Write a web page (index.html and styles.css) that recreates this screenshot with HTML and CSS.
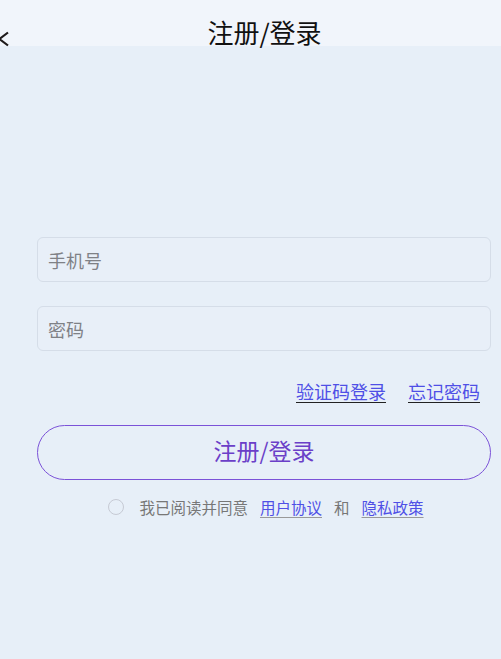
FILE: index.html
```html
<!DOCTYPE html>
<html lang="zh-CN">
<head>
  <meta charset="UTF-8" />
  <meta name="viewport" content="width=device-width, initial-scale=1.0" />
  <title>注册/登录</title>
  <link rel="stylesheet" href="styles.css">
</head>
<body>
  <header class="nav-bar">
    <a class="back" href="#">
      <svg width="12" height="16" viewBox="0 0 12 16"><path d="M10 1.5 L1.5 8 L10 14.5" fill="none" stroke="#1e1a1a" stroke-width="2.2"/></svg>
    </a>
    <h1 class="nav-title">注册/登录</h1>
  </header>

  <main class="login">
    <div class="field">
      <input type="text" placeholder="手机号">
    </div>
    <div class="field">
      <input type="password" placeholder="密码">
    </div>

    <div class="links">
      <a href="#">验证码登录</a>
      <a href="#">忘记密码</a>
    </div>

    <button class="submit">注册/登录</button>

    <div class="agree">
      <span class="radio"></span>
      <span>我已阅读并同意</span>
      <a href="#">用户协议</a>
      <span>和</span>
      <a href="#">隐私政策</a>
    </div>
  </main>
</body>
</html>
```

FILE: styles.css
```css
* {
  margin: 0;
  padding: 0;
  box-sizing: border-box;
}

body {
  font-family: "Noto Sans CJK SC", "Noto Sans", sans-serif;
  background: #e7eff8;
  color: #333;
  min-height: 100vh;
}

/* Top bar */
.nav-bar {
  position: relative;
  height: 46px;
  background: #f1f5fb;
  display: flex;
  justify-content: center;
  align-items: flex-end;
}

.back {
  position: absolute;
  left: -2px;
  top: 31px;
  display: block;
}

.back svg {
  display: block;
}

.nav-title {
  font-size: 26px;
  font-weight: 400;
  line-height: 26px;
  color: #111;
  padding-left: 28px;
  margin-bottom: 1px;
}

/* Form */
.login {
  padding: 191px 10px 0 37px;
  display: flex;
  flex-direction: column;
}

.field {
  margin-bottom: 24px;
}

.field input {
  width: 100%;
  height: 45px;
  padding: 0 10px;
  border: 1px solid #d5dde8;
  border-radius: 6px;
  background: #e8eff8;
  font-family: inherit;
  font-size: 18px;
  color: #333;
  outline: none;
}

.field input::placeholder {
  color: #7f8186;
}

.links {
  display: flex;
  justify-content: flex-end;
  gap: 22px;
  padding-right: 11px;
  margin-top: 3px;
  line-height: 26px;
}

.links a {
  font-size: 18px;
  color: #4f4fe6;
  text-decoration: underline;
  text-decoration-color: #222;
  text-underline-offset: 3px;
}

.submit {
  margin-top: 21px;
  height: 55px;
  padding-bottom: 5px;
  border: 1px solid #7b52d8;
  border-radius: 28px;
  background: transparent;
  font-family: inherit;
  font-size: 23px;
  color: #6b3fc8;
  cursor: pointer;
}

.agree {
  margin-top: 17px;
  display: flex;
  justify-content: center;
  align-items: center;
  gap: 12px;
  font-size: 15.5px;
  color: #777;
  line-height: 20px;
  padding-left: 4px;
}

.agree .radio {
  width: 16px;
  height: 16px;
  border: 1.5px solid #c6cad4;
  border-radius: 50%;
  margin-right: 3px;
}

.agree a {
  color: #4f4fe6;
  text-decoration: underline;
  text-decoration-color: #999;
  text-underline-offset: 3px;
}
```
